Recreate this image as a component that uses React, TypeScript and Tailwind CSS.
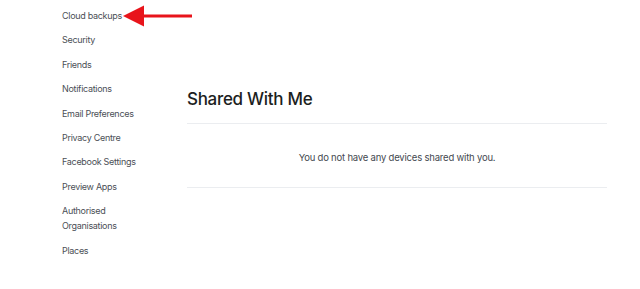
import React from "react";

const items: string[][] = [
  ["Cloud backups"],
  ["Security"],
  ["Friends"],
  ["Notifications"],
  ["Email Preferences"],
  ["Privacy Centre"],
  ["Facebook Settings"],
  ["Preview Apps"],
  ["Authorised", "Organisations"],
  ["Places"],
];

export default function App() {
  return (
    <div className="relative w-[640px] h-[289px] overflow-hidden bg-white font-['Inter',sans-serif]">
      <div className="absolute left-[440px] top-[-9px] text-[10px] leading-[10px] text-[#8fa6dc]">Remove</div>
      <div className="flex">
        <nav className="w-[187px] pl-[62px] pt-[8px] flex flex-col gap-[9.4px]">
          {items.map((it, i) => (
            <div key={i} className="relative text-[9px] leading-[15px] tracking-[-0.3px] text-[#4b4f56]">
              {it.map((l) => (
                <div key={l}>{l}</div>
              ))}
              {i === 0 && (
                <svg className="absolute left-[61px] top-[-3px]" width="70" height="22" viewBox="0 0 70 22">
                  <rect x="18" y="9.5" width="51" height="3" fill="#e8141b" />
                  <polygon points="0,11 21,0.5 21,21.5" fill="#e8141b" />
                </svg>
              )}
            </div>
          ))}
        </nav>
        <main className="w-[420px] pt-[87px]">
          <h2 className="text-[17px] leading-[24px] tracking-[-0.3px] text-[#1c1e21] font-medium">Shared With Me</h2>
          <div className="mt-[12px] border-t border-[#ebedf0]" />
          <p className="h-[63px] pt-[6px] flex items-center justify-center text-[9.5px] tracking-[-0.2px] text-[#444950]">
            You do not have any devices shared with you.
          </p>
          <div className="border-t border-[#ebedf0]" />
        </main>
      </div>
    </div>
  );
}
